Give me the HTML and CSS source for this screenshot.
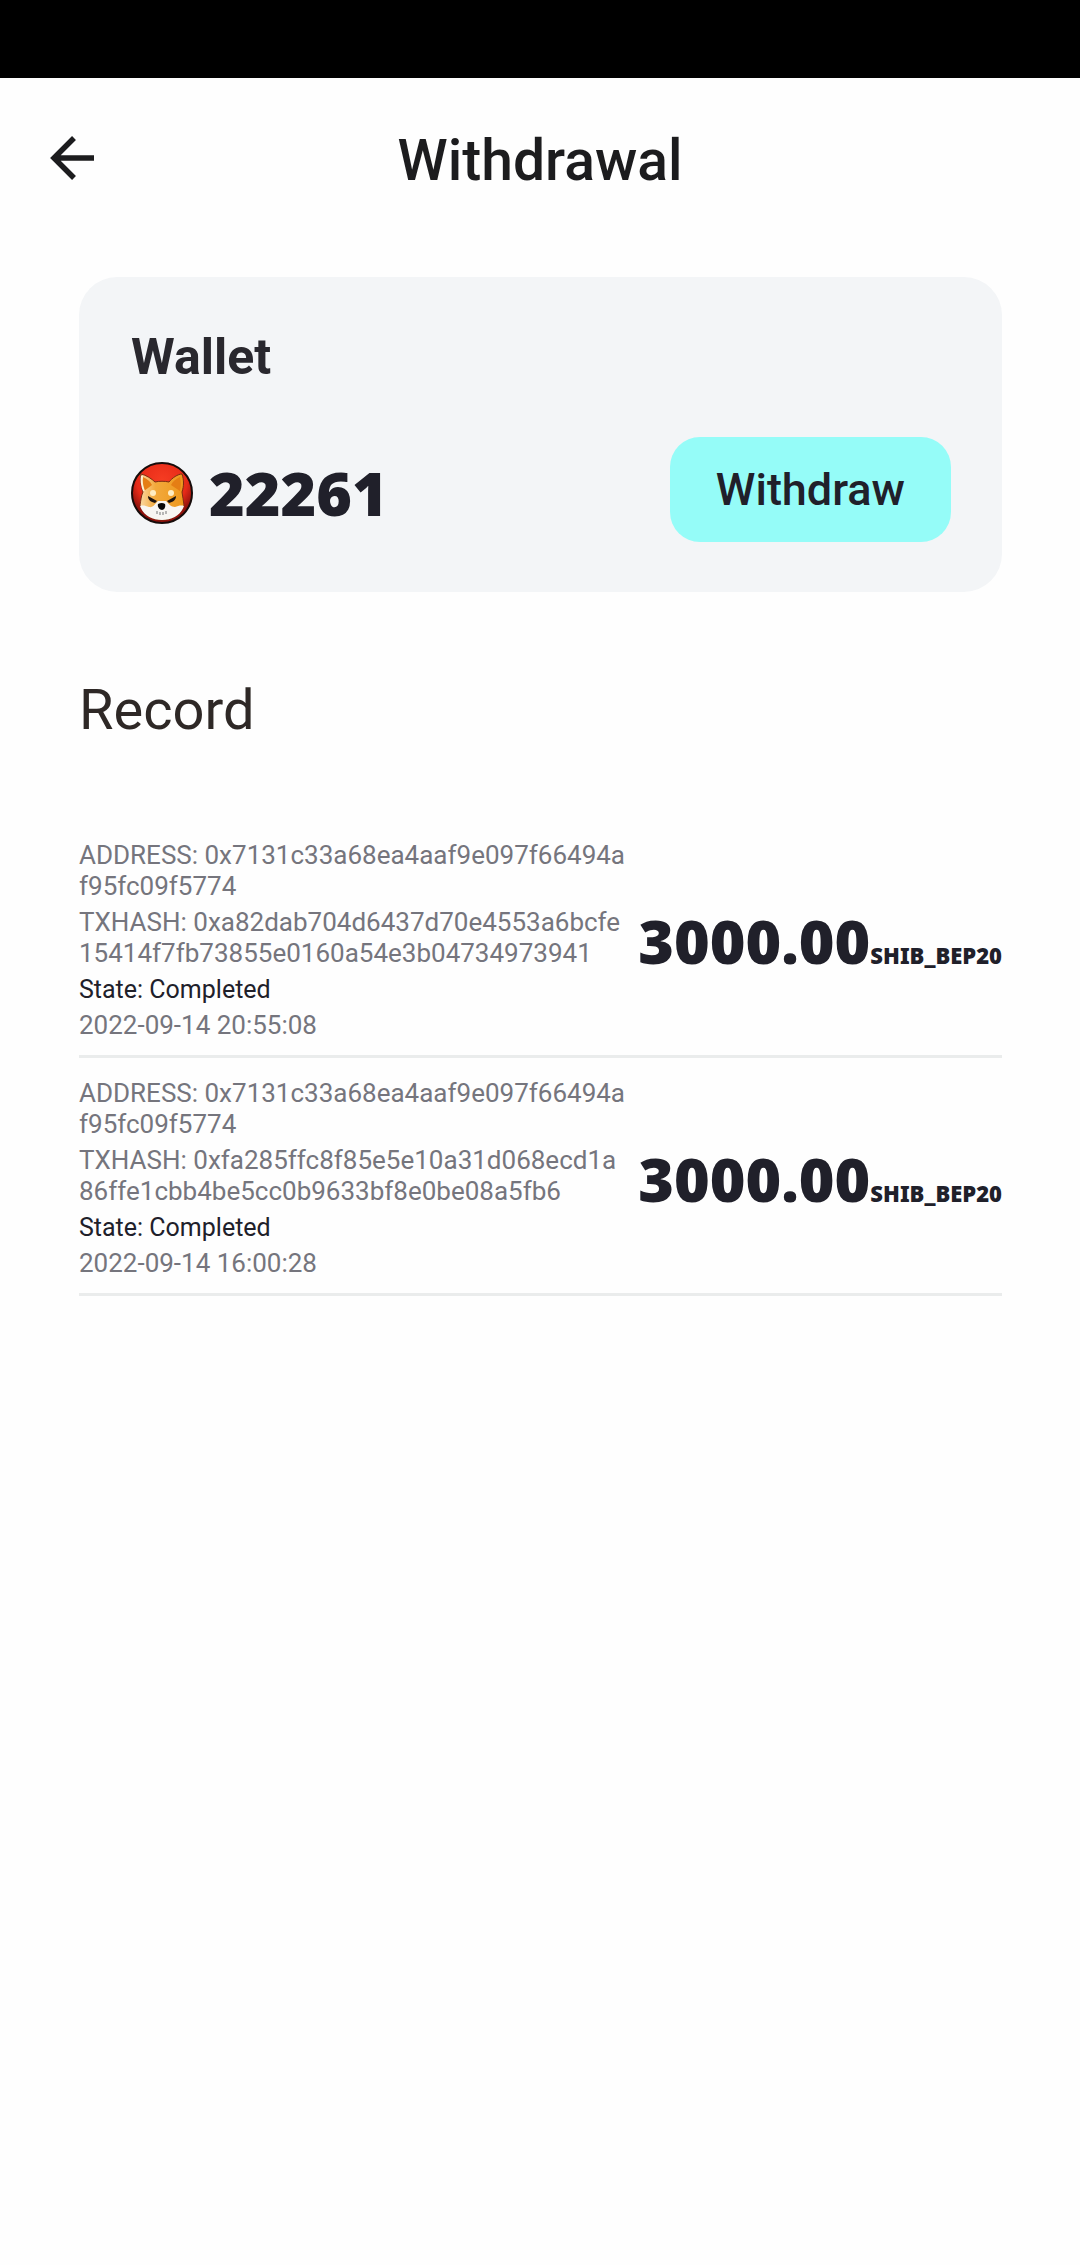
FILE: index.html
```html
<!DOCTYPE html>
<html lang="en">
<head>
<meta charset="utf-8">
<meta name="viewport" content="width=device-width, initial-scale=1">
<title>Withdrawal</title>
<link rel="stylesheet" href="styles.css">
</head>
<body>
<div class="status-bar"></div>
<header class="app-bar">
  <button class="back" type="button" aria-label="Back">
    <svg class="back-icon" viewBox="0 0 44 44" aria-hidden="true">
      <path d="M44 22H4M24 2L4 22l20 20" fill="none" stroke="#1c1c1e" stroke-width="5.5"/>
    </svg>
  </button>
  <h1 class="title">Withdrawal</h1>
</header>
<main class="content">
  <section class="wallet">
    <h2 class="wallet-title">Wallet</h2>
    <div class="wallet-row">
      <div class="balance">
        <svg class="coin" viewBox="0 0 62 62" aria-hidden="true">
          <defs>
            <radialGradient id="red" cx=".5" cy=".3" r=".6">
              <stop offset="0" stop-color="#f63d22"/>
              <stop offset=".7" stop-color="#e62a18"/>
              <stop offset="1" stop-color="#8f120c"/>
            </radialGradient>
            <linearGradient id="fur" x1="0" x2="1">
              <stop offset="0" stop-color="#fbd9a2"/>
              <stop offset=".35" stop-color="#f2a93c"/>
              <stop offset="1" stop-color="#ee981c"/>
            </linearGradient>
          </defs>
          <circle cx="31" cy="31" r="30" fill="url(#red)" stroke="#160c0b" stroke-width="2"/>
          <path d="M10 12c5 1 11 5 14 8 4-1 10-1 14 0 3-4 9-8 13-8 2 6 2 12 0 18 1 4 1 9 2 13-3 9-12 15-22 15S12 52 9 43c1-5 1-9 3-13-2-6-3-12-2-18z" fill="url(#fur)" stroke="#7b2d12" stroke-width="1"/>
          <path d="M12 15c4 2 7 4 9 8l-8 6c-1-5-2-9-1-14zM49 15c-4 2-7 4-9 8l9 6c1-5 1-9 0-14z" fill="#e57e14"/>
          <path d="M11 14c-1 5 0 10 2 15" fill="none" stroke="#fff0d0" stroke-width="2"/>
          <path d="M9 44c3-1 6 0 9 1 4 1 6-3 9-6h8c3 3 5 6 9 6 3-1 6-2 9-1-3 9-12 14-22 14S12 53 9 44z" fill="#f8f6f2"/>
          <circle cx="22" cy="31" r="3" fill="#ffedc3"/>
          <circle cx="40" cy="31" r="3" fill="#ffedc3"/>
          <path d="M17 34l9 5-2 2c-4-1-7-3-7-7zM45 34l-9 5 2 2c4-1 7-3 7-7z" fill="#1e1510"/>
          <path d="M27 42q4-2 7 0c1 3-1 6-3 6s-5-3-4-6z" fill="#090909"/>
          <path d="M26 49v3M29 50v3M32 50v3M35 49v3" stroke="#777" stroke-width="1"/>
        </svg>
        <span class="figure">22261</span>
      </div>
      <button class="withdraw" type="button">Withdraw</button>
    </div>
  </section>
  <h2 class="record-title">Record</h2>
  <ul class="records">
    <li class="record">
      <div class="details">
        <p>ADDRESS: 0x7131c33a68ea4aaf9e097f66494af95fc09f5774</p>
        <p>TXHASH: 0xa82dab704d6437d70e4553a6bcfe15414f7fb73855e0160a54e3b04734973941</p>
        <p class="state">State: Completed</p>
        <p><time datetime="2022-09-14T20:55:08">2022-09-14 20:55:08</time></p>
      </div>
      <div class="amount"><span class="figure">3000.00</span><span class="unit">SHIB_BEP20</span></div>
    </li>
    <li class="record">
      <div class="details">
        <p>ADDRESS: 0x7131c33a68ea4aaf9e097f66494af95fc09f5774</p>
        <p>TXHASH: 0xfa285ffc8f85e5e10a31d068ecd1a86ffe1cbb4be5cc0b9633bf8e0be08a5fb6</p>
        <p class="state">State: Completed</p>
        <p><time datetime="2022-09-14T16:00:28">2022-09-14 16:00:28</time></p>
      </div>
      <div class="amount"><span class="figure">3000.00</span><span class="unit">SHIB_BEP20</span></div>
    </li>
  </ul>
</main>
</body>
</html>
```
FILE: styles.css
```css
* {
  box-sizing: border-box;
}

body {
  margin: 0;
  min-height: 100vh;
  background: #fefefe;
  color: #20202a;
  font-family: Roboto, "Liberation Sans", sans-serif;
}

h1, h2, p, ul {
  margin: 0;
  padding: 0;
}

button {
  border: 0;
  font: inherit;
  color: inherit;
}

.status-bar {
  height: 78px;
  background: #000;
}

.app-bar {
  display: grid;
  grid-template-columns: 94px 1fr 94px;
  align-items: center;
  height: 160px;
}

.back {
  padding: 0;
  background: none;
}

.back-icon {
  display: block;
  width: 44px;
  height: 44px;
  margin-left: auto;
}

.title {
  padding-top: 6px;
  color: #1c1c1e;
  font-size: 57px;
  font-weight: 500;
  line-height: 66px;
  text-align: center;
}

.content {
  padding: 39px 78px 0 79px;
}

.wallet {
  padding: 50px 51px 50px 52px;
  border-radius: 38px;
  background: #f3f5f7;
}

.wallet-title {
  color: #29282e;
  font-size: 50px;
  font-weight: 700;
  line-height: 60px;
}

.wallet-row {
  display: flex;
  align-items: center;
  justify-content: space-between;
  margin-top: 50px;
}

.balance {
  display: flex;
  align-items: center;
  gap: 16px;
  padding-top: 6px;
}

.coin {
  width: 62px;
  height: 62px;
}

.figure {
  font-family: "Noto Sans", sans-serif;
  font-size: 61px;
  font-weight: 900;
  line-height: 60px;
}

.withdraw {
  padding: 0 46px;
  border-radius: 30px;
  background: #95fcf8;
  color: #20202a;
  font-size: 45px;
  font-weight: 500;
  line-height: 105px;
}

.record-title {
  margin-top: 85px;
  color: #2e2826;
  font-size: 56px;
  font-weight: 400;
  line-height: 66px;
}

.records {
  margin-top: 77px;
  list-style: none;
}

.record {
  display: flex;
  align-items: center;
  gap: 10px;
  padding: 20px 0 14px;
  border-bottom: 3px solid #eaecec;
}

.details {
  display: flex;
  flex: 1;
  flex-direction: column;
  gap: 5px;
  min-width: 0;
  color: #75757d;
  font-size: 26px;
  line-height: 31px;
  word-break: break-all;
}

.details .state {
  color: #20202a;
  font-size: 25px;
}

.amount {
  white-space: nowrap;
}

.unit {
  font-family: "Noto Sans", sans-serif;
  font-size: 22px;
  font-weight: 900;
}
```
